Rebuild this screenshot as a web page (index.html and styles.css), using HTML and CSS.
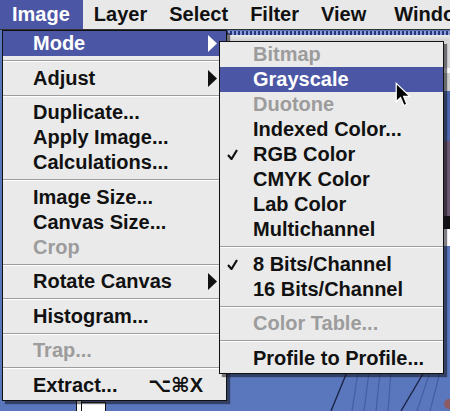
FILE: index.html
```html
<!DOCTYPE html>
<html lang="en">
<head>
    <meta charset="utf-8">
    <title>Image menu</title>
    <link rel="stylesheet" href="styles.css">
</head>
<body>
    <div class="screen">
        <div class="menubar">
            <span class="title active">Image</span>
            <span class="title">Layer</span>
            <span class="title">Select</span>
            <span class="title">Filter</span>
            <span class="title">View</span>
            <span class="title">Window</span>
        </div>

        <div class="desk">
            <!-- the photo in the document window behind the menus -->
            <svg class="photo" viewBox="0 0 450 381" width="450" height="381">
                <g stroke="#40589c" stroke-width="1.2" opacity="0.8">
                    <line x1="352" y1="381" x2="358" y2="342"/>
                    <line x1="364" y1="381" x2="369" y2="342"/>
                    <line x1="376" y1="381" x2="380" y2="342"/>
                    <line x1="388" y1="381" x2="391" y2="342"/>
                    <line x1="417" y1="381" x2="430" y2="342"/>
                    <line x1="430" y1="381" x2="440" y2="342"/>
                </g>
                <g stroke="#1c2347" stroke-width="1.4">
                    <line x1="331" y1="381" x2="347" y2="342"/>
                    <line x1="401" y1="381" x2="424" y2="342"/>
                </g>
                <circle cx="449" cy="374" r="5" fill="#8c5a62"/>
                <rect x="76.5" y="368.5" width="5" height="13" fill="#fff" stroke="#111"/>
                <rect x="81.5" y="372.5" width="24" height="10" fill="#fff" stroke="#111"/>
            </svg>
            <div class="doc-bar"></div>
            <div class="doc-edge"></div>

            <div class="menu main">
                <div class="item hilite">Mode
                    <svg class="arrow" viewBox="0 0 9 17"><polygon points="0,0 9,8.5 0,17"/></svg>
                </div>
                <div class="sep"></div>
                <div class="item">Adjust
                    <svg class="arrow" viewBox="0 0 9 17"><polygon points="0,0 9,8.5 0,17"/></svg>
                </div>
                <div class="sep"></div>
                <div class="item">Duplicate...</div>
                <div class="item">Apply Image...</div>
                <div class="item">Calculations...</div>
                <div class="sep"></div>
                <div class="item">Image Size...</div>
                <div class="item">Canvas Size...</div>
                <div class="item off">Crop</div>
                <div class="sep"></div>
                <div class="item">Rotate Canvas
                    <svg class="arrow" viewBox="0 0 9 17"><polygon points="0,0 9,8.5 0,17"/></svg>
                </div>
                <div class="sep"></div>
                <div class="item">Histogram...</div>
                <div class="sep"></div>
                <div class="item off">Trap...</div>
                <div class="sep"></div>
                <div class="item">Extract... <span class="key">⌥⌘X</span></div>
            </div>

            <div class="menu sub">
                <div class="item off">Bitmap</div>
                <div class="item hilite">Grayscale</div>
                <div class="item off">Duotone</div>
                <div class="item">Indexed Color...</div>
                <div class="item">
                    <svg class="check" viewBox="0 0 11 11"><path d="M1 6 L4.5 10 L10 1"/></svg>
                    RGB Color
                </div>
                <div class="item">CMYK Color</div>
                <div class="item">Lab Color</div>
                <div class="item">Multichannel</div>
                <div class="sep"></div>
                <div class="item">
                    <svg class="check" viewBox="0 0 11 11"><path d="M1 6 L4.5 10 L10 1"/></svg>
                    8 Bits/Channel
                </div>
                <div class="item">16 Bits/Channel</div>
                <div class="sep"></div>
                <div class="item off">Color Table...</div>
                <div class="sep"></div>
                <div class="item">Profile to Profile...</div>
            </div>

            <svg class="cursor" viewBox="0 0 13 21" width="16" height="26">
                <path d="M1 1 V16 L4.5 12.5 L7.2 19 L9.6 18 L7 11.6 H12 Z"/>
            </svg>
        </div>
    </div>
</body>
</html>
```

FILE: styles.css
```css
body {
    margin: 0;
    background-color: #5a77bd;
    font-family: "Liberation Sans", "DejaVu Sans", Arial, sans-serif;
    font-weight: bold;
    font-size: 20px;
    color: #111;
}

.screen {
    width: 450px;
    height: 411px;
    overflow: hidden;
}

/* menu bar */
.menubar {
    display: flex;
    height: 29px;
    line-height: 29px;
    background-color: #e8e8e8;
    border-bottom: 1px solid #333;
    white-space: nowrap;
}

.title {
    padding: 0 11px;
}

.title:first-child {
    padding-left: 12px;
    padding-right: 13px;
}

.title:last-child {
    padding-left: 17px;
}

.title.active {
    background-color: #4b56a5;
    color: #fff;
}

/* desktop under the menus */
.desk {
    position: relative;
    height: 381px;
}

.photo {
    position: absolute;
    left: 0;
    top: 0;
}

.doc-bar {
    position: absolute;
    left: 226px;
    top: 1px;
    width: 224px;
    height: 10px;
    background:
        repeating-linear-gradient(90deg, #27357a 0 2px, #8d9dd6 2px 4px) top / 100% 4px no-repeat,
        linear-gradient(#fff, #cfcfcf);
}

.doc-edge {
    position: absolute;
    left: 443px;
    top: 11px;
    width: 7px;
    height: 220px;
    background: linear-gradient(
        #d8d8d8 0 27px,
        #fff 27px 32px,
        #cfcfcf 32px 50px,
        #4d66ad 50px 100px,
        #6d5a72 100px 175px,
        #111 175px 188px,
        #fff 188px 205px,
        #5a77bd 205px
    );
}

/* pull-down menus */
.menu {
    position: absolute;
    background-color: #eaeaea;
    border: 1px solid #111;
    box-shadow: 3px 3px 1px rgba(20, 20, 30, 0.55);
}

.main {
    left: 2px;
    top: 0;
    width: 223px;
    padding-bottom: 2px;
}

.sub {
    left: 219px;
    top: 11px;
    width: 223px;
    padding-bottom: 2px;
}

.item {
    position: relative;
    display: flex;
    align-items: center;
    height: 25px;
    line-height: 25px;
    padding-left: 30px;
    white-space: nowrap;
}

.sub .item {
    padding-left: 33px;
}

.item.off {
    color: #9c9c9c;
}

.item.hilite {
    background-color: #4b56a5;
    color: #fff;
}

.arrow {
    margin-left: auto;
    margin-right: 9px;
    width: 9px;
    height: 17px;
    fill: currentColor;
}

.key {
    margin-left: auto;
    margin-right: 23px;
}

.check {
    position: absolute;
    left: 7px;
    top: 7px;
    width: 11px;
    height: 11px;
    fill: none;
    stroke: #111;
    stroke-width: 2.2;
}

.sep {
    height: 9.5px;
    padding-top: 4px;
    box-sizing: border-box;
}

.sep::before {
    content: "";
    display: block;
    border-top: 1px solid #9d9d9d;
    border-bottom: 1px solid #fff;
}

.cursor {
    position: absolute;
    left: 395px;
    top: 52px;
    fill: #000;
    stroke: #fff;
    stroke-width: 1;
}
```
